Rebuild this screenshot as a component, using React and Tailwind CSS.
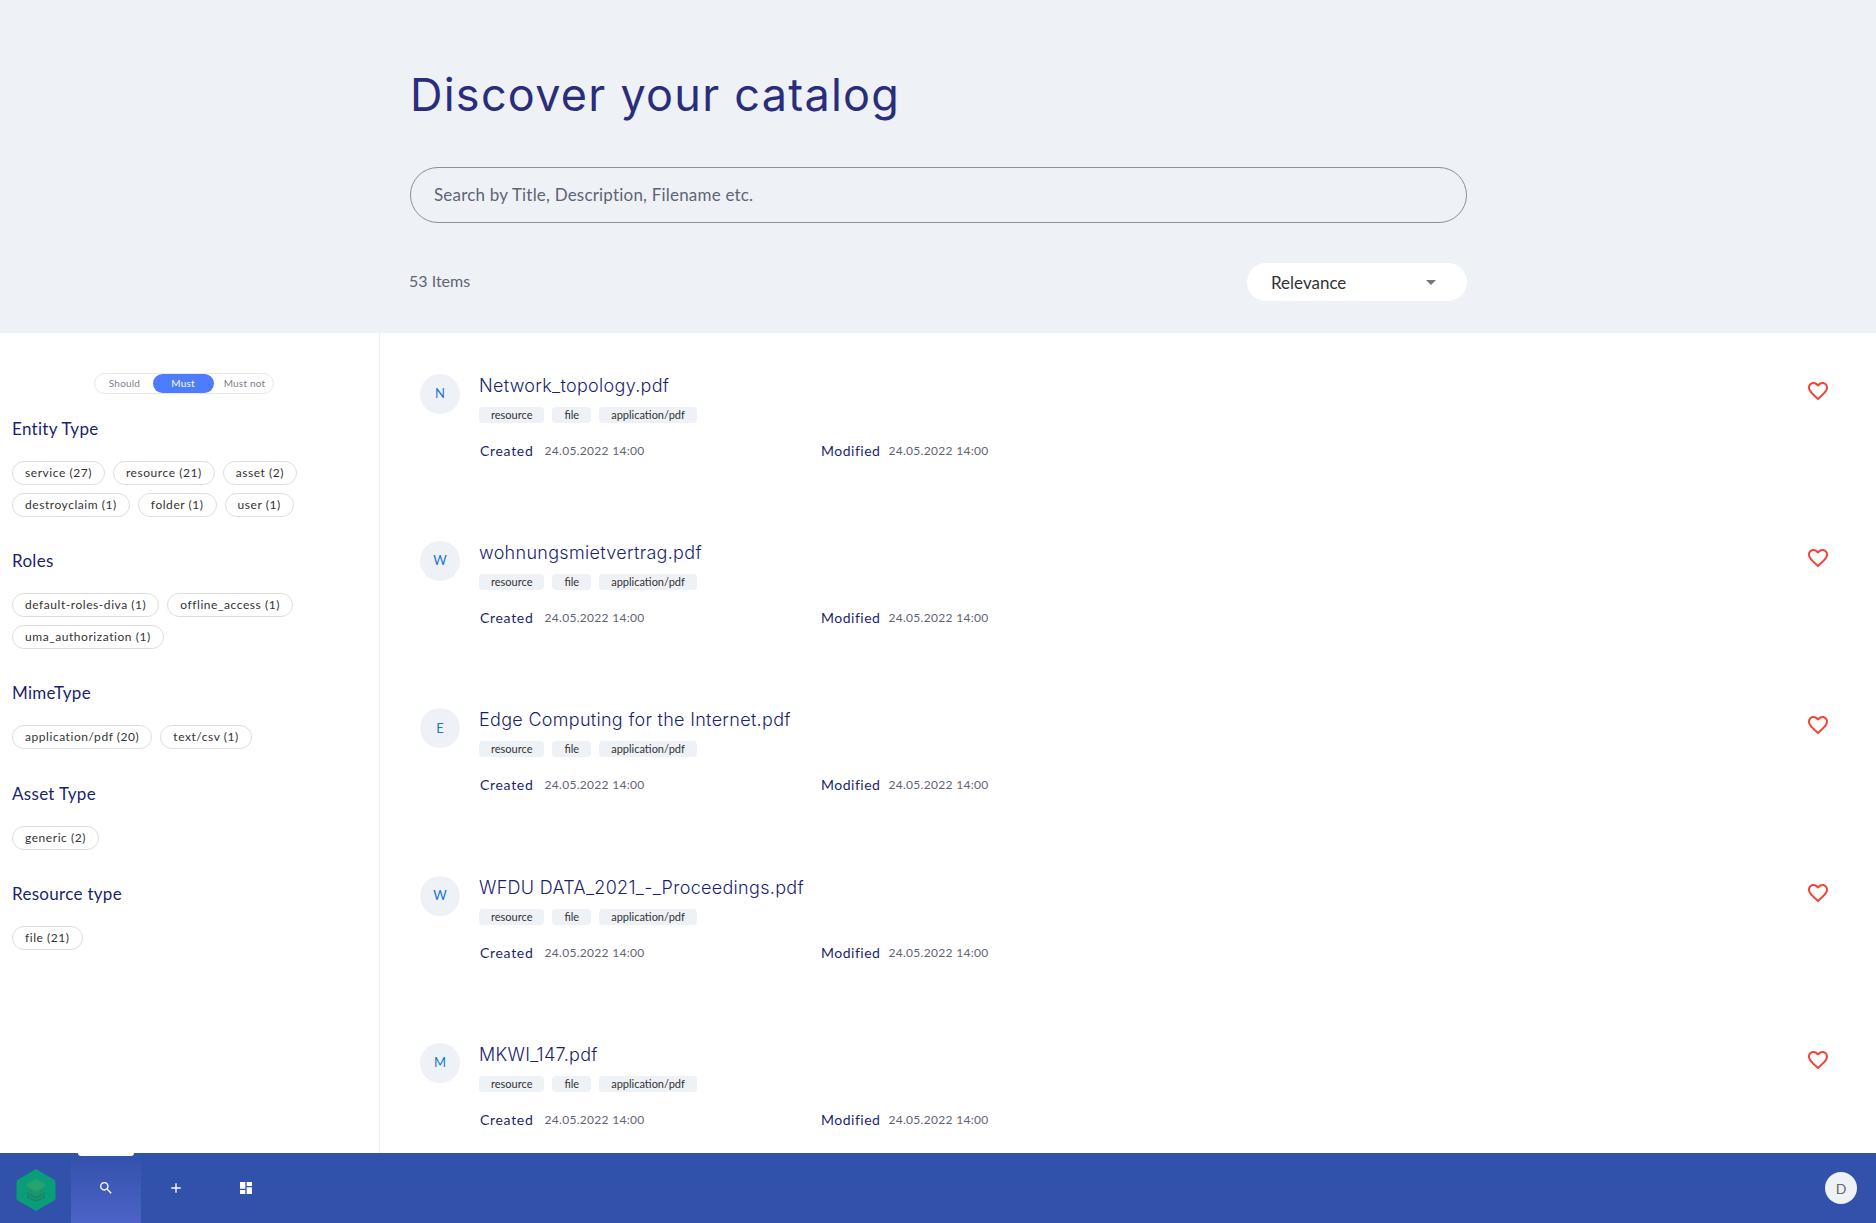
const items = [
  { letter: 'N', title: 'Network_topology.pdf' },
  { letter: 'W', title: 'wohnungsmietvertrag.pdf' },
  { letter: 'E', title: 'Edge Computing for the Internet.pdf' },
  { letter: 'W', title: 'WFDU DATA_2021_-_Proceedings.pdf' },
  { letter: 'M', title: 'MKWI_147.pdf' },
];

const facets = [
  { title: 'Entity Type', chips: ['service (27)', 'resource (21)', 'asset (2)', 'destroyclaim (1)', 'folder (1)', 'user (1)'] },
  { title: 'Roles', chips: ['default-roles-diva (1)', 'offline_access (1)', 'uma_authorization (1)'] },
  { title: 'MimeType', chips: ['application/pdf (20)', 'text/csv (1)'] },
  { title: 'Asset Type', chips: ['generic (2)'] },
  { title: 'Resource type', chips: ['file (21)'] },
];

const Heart = () => (
  <svg viewBox="0 0 24 24" className="w-6 h-6 fill-[#f44336]">
    <path d="M16.5 3c-1.74 0-3.41.81-4.5 2.09C10.91 3.81 9.24 3 7.5 3 4.42 3 2 5.42 2 8.5c0 3.78 3.4 6.86 8.55 11.54L12 21.35l1.45-1.32C18.6 15.36 22 12.28 22 8.5 22 5.42 19.58 3 16.5 3zm-4.4 15.55l-.1.1-.1-.1C7.14 14.24 4 11.39 4 8.5 4 6.5 5.5 5 7.5 5c1.54 0 3.04.99 3.57 2.36h1.87C13.46 5.99 14.96 5 16.5 5c2 0 3.5 1.5 3.5 3.5 0 2.89-3.14 5.74-7.9 10.05z" />
  </svg>
);

const Logo = () => (
  <svg viewBox="0 0 40 44" className="w-10 h-11 mt-[4px]">
    <path d="M20 1 L38 11.5 Q39.5 12.5 39.5 14 L39.5 30 Q39.5 31.5 38 32.5 L20 43 L2 32.5 Q0.5 31.5 0.5 30 L0.5 14 Q0.5 12.5 2 11.5 Z" fill="#0a9e78" />
    <path d="M20 11 L29 15.5 L29 19 L20 23.5 L11 19 L11 15.5 Z" fill="#27a36f" />
    <path d="M11 20 L20 24.5 L29 20 L29 23 L20 27.5 L11 23 Z" fill="#1f9369" />
    <path d="M11 24 L20 28.5 L29 24 L29 27 L20 31.5 L11 27 Z" fill="#1b8a64" />
    <path d="M11 28 L20 32.5 L29 28 L29 29.5 L20 34 L11 29.5 Z" fill="#17825f" />
  </svg>
);

const Result = ({ letter, title }) => (
  <div className="h-[167.2px] flex pl-[40px] pr-[46px] pt-[41px]">
    <div className="w-10 h-10 rounded-full bg-[#eef1f6] flex items-center justify-center text-[13px] text-[#1976d2]">
      {letter}
    </div>
    <div className="ml-[19px] flex-1">
      <div className="text-[18px] leading-[24px] text-[#1c1f70] tracking-[0.3px] font-['Inter',sans-serif] font-light">{title}</div>
      <div className="flex gap-2 mt-[9px] text-[11px] leading-4 text-[#333]">
        <span className="h-4 px-3 rounded bg-[#eef1f6]">resource</span>
        <span className="h-4 px-3 rounded bg-[#eef1f6]">file</span>
        <span className="h-4 px-3 rounded bg-[#eef1f6]">application/pdf</span>
      </div>
      <div className="flex mt-[18px] text-[12px] leading-[20px] text-[#5f6475] tracking-[0.3px]">
        <div className="w-[342px] flex gap-[11px]">
          <span className="text-[14px] text-[#1c1f70] tracking-[0.7px] ml-px">Created</span>
          <span>24.05.2022 14:00</span>
        </div>
        <div className="flex gap-[8px]">
          <span className="text-[14px] text-[#1c1f70] tracking-[0.5px]">Modified</span>
          <span>24.05.2022 14:00</span>
        </div>
      </div>
    </div>
    <div className="mt-[5px]">
      <Heart />
    </div>
  </div>
);

export default function App() {
  return (
    <div className="h-screen flex flex-col overflow-hidden bg-white font-['Lato',sans-serif]">
      <header className="h-[333px] shrink-0 bg-[#eef1f6] pl-[410px] pt-[66px]">
        <div className="w-[1057px]">
          <h1 className="text-[45px] leading-[58px] text-[#2a2d7c] tracking-[1.25px] font-['Inter',sans-serif]">Discover your catalog</h1>
          <div className="h-[56px] mt-[43px] rounded-full border border-[#8a8f98] flex items-center pl-[23px] text-[17px] tracking-[0.2px] text-[#5f6475]">
            Search by Title, Description, Filename etc.
          </div>
          <div className="flex items-center justify-between mt-[40px]">
            <span className="text-[16px] text-[#5f6475] -ml-px -mt-[2px]">53 Items</span>
            <div className="w-[220px] h-[38px] rounded-full bg-white flex items-center justify-between pl-6 pr-[31px] text-[17px] text-[#333]">
              <span className="mt-px">Relevance</span>
              <span className="w-0 h-0 border-x-[5px] border-x-transparent border-t-[5px] border-t-[#777]"></span>
            </div>
          </div>
        </div>
      </header>

      <main className="flex-1 flex min-h-0">
        <aside className="w-[380px] shrink-0 border-r border-[#eeeeee] pl-3 pr-3">
          <div className="flex justify-center mt-[40px] pr-[12px]">
            <div className="w-[180px] h-[21px] rounded-full border border-[#e8e8e8] flex text-[10px] leading-[19px] text-center text-[#7a7f8c] tracking-[0.2px]">
              <span className="w-[58px] pl-[2px]">Should</span>
              <span className="w-[61px] rounded-full bg-[#4d7cfe] text-white">Must</span>
              <span className="w-[59px] pl-[3px]">Must not</span>
            </div>
          </div>
          {facets.map((facet, i) => (
            <section key={facet.title} className={i === 0 ? 'mt-[23px]' : i === 3 ? 'mt-[33px]' : 'mt-[32px]'}>
              <h3 className="text-[17px] leading-[24px] tracking-[0.3px] text-[#1c1f70]">{facet.title}</h3>
              <div className="flex flex-wrap gap-2 mt-[20px] pr-[44px]">
                {facet.chips.map((chip) => (
                  <span key={chip} className="h-6 px-3 rounded-full border border-[#dedede] text-[12px] leading-[22px] text-[#333] tracking-[0.55px]">
                    {chip}
                  </span>
                ))}
              </div>
            </section>
          ))}
        </aside>
        <div className="flex-1 min-w-0">
          {items.map((item, i) => (
            <Result key={i} {...item} />
          ))}
        </div>
      </main>

      <nav className="h-[70px] shrink-0 bg-[#3151ab] flex items-center relative">
        <div className="w-[71px] pl-4">
          <Logo />
        </div>
        <div className="w-[70px] h-full flex items-center justify-center relative bg-gradient-to-b from-[#3151ab] to-[#4d63c7]">
          <span className="absolute top-0 left-[7px] w-[56px] h-[3px] bg-white rounded-b"></span>
          <svg viewBox="0 0 24 24" className="w-4 h-4 fill-white">
            <path d="M15.5 14h-.79l-.28-.27C15.41 12.59 16 11.11 16 9.5 16 5.91 13.09 3 9.5 3S3 5.91 3 9.5 5.91 16 9.5 16c1.61 0 3.09-.59 4.23-1.57l.27.28v.79l5 4.99L20.49 19l-4.99-5zm-6 0C7.01 14 5 11.99 5 9.5S7.01 5 9.5 5 14 7.01 14 9.5 11.99 14 9.5 14z" />
          </svg>
        </div>
        <div className="w-[70px] flex justify-center">
          <svg viewBox="0 0 24 24" className="w-4 h-4 fill-white">
            <path d="M19 13h-6v6h-2v-6H5v-2h6V5h2v6h6v2z" />
          </svg>
        </div>
        <div className="w-[70px] flex justify-center">
          <svg viewBox="0 0 24 24" className="w-4 h-4 fill-white">
            <path d="M3 13h8V3H3v10zm0 8h8v-6H3v6zm10 0h8V11h-8v10zm0-18v6h8V3h-8z" />
          </svg>
        </div>
        <div className="ml-auto mr-[19px] w-8 h-8 rounded-full bg-[#eef1f6] flex items-center justify-center text-[14px] text-[#666]">
          D
        </div>
      </nav>
    </div>
  );
}
